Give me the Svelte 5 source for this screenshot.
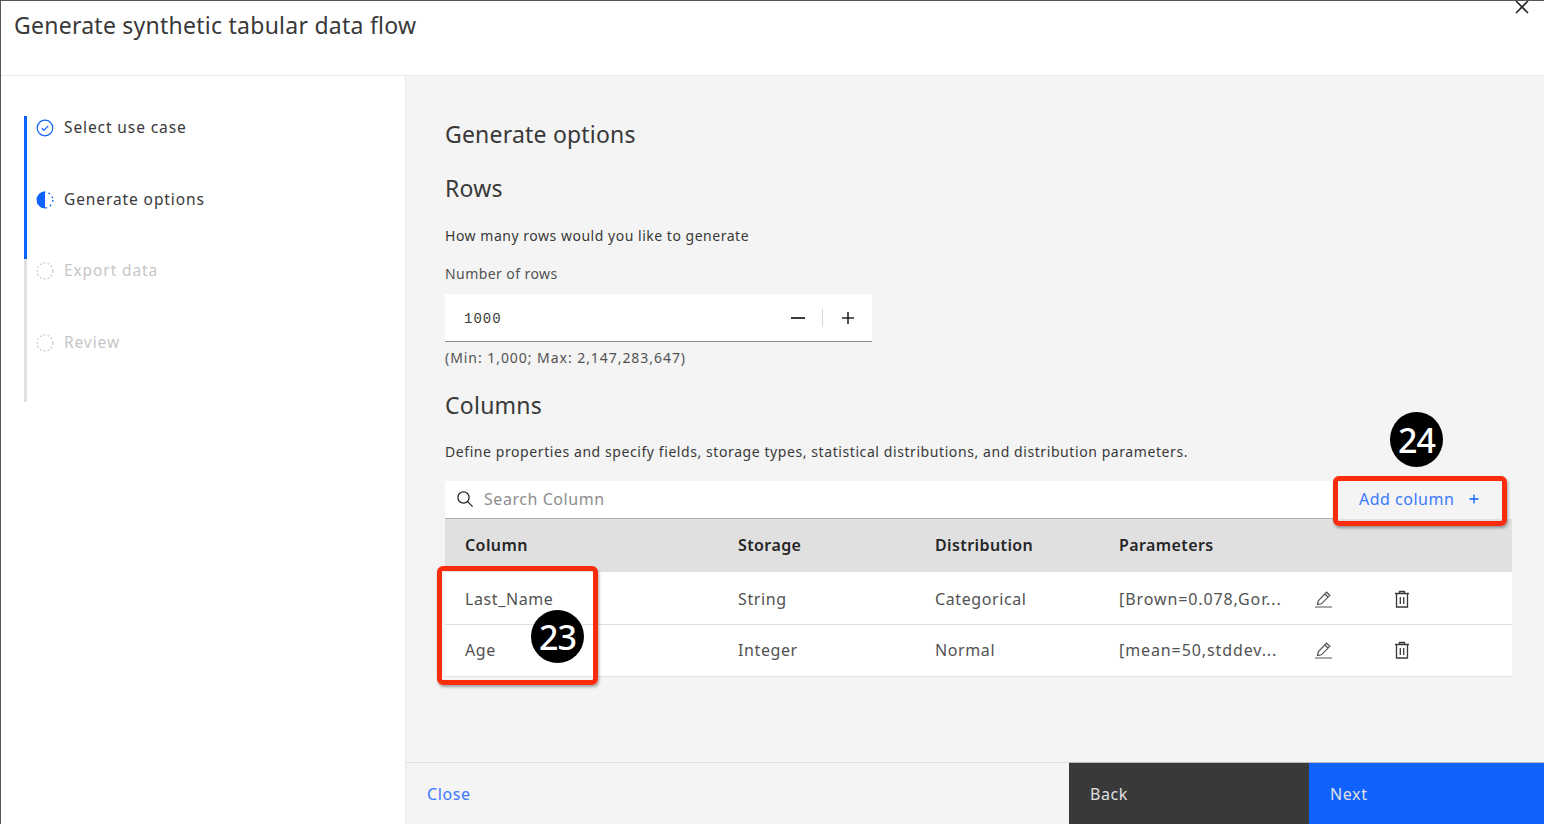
<script>
  const steps = [
    { label: 'Select use case', state: 'done' },
    { label: 'Generate options', state: 'current' },
    { label: 'Export data', state: 'todo' },
    { label: 'Review', state: 'todo' },
  ]

  const rows = [
    { column: 'Last_Name', storage: 'String', distribution: 'Categorical', parameters: '[Brown=0.078,Gor...' },
    { column: 'Age', storage: 'Integer', distribution: 'Normal', parameters: '[mean=50,stddev...' },
  ]
</script>

<div class="modal">
  <header class="head">
    <h1>Generate synthetic tabular data flow</h1>
    <svg class="close" width="18" height="18" viewBox="0 0 18 18" aria-hidden="true">
      <path d="M3 0 L15 12 M15 0 L3 12" stroke="#262626" stroke-width="1.6" fill="none" />
    </svg>
  </header>

  <div class="body">
    <nav class="side">
      <ul class="steps">
        {#each steps as step}
          <li class="step {step.state}">
            <svg width="18" height="18" viewBox="0 0 18 18" aria-hidden="true">
              {#if step.state === 'done'}
                <circle cx="9" cy="9" r="7.8" fill="none" stroke="#0f62fe" stroke-width="1.2" />
                <path d="M5.8 9.2 L8 11.3 L12.2 6.8" fill="none" stroke="#0f62fe" stroke-width="1.2" />
              {:else if step.state === 'current'}
                <path d="M9 0.6 A8.4 8.4 0 0 0 9 17.4 Z" fill="#0f62fe" />
                <circle cx="9" cy="9" r="7.8" fill="none" stroke="#0f62fe" stroke-width="1.3" stroke-dasharray="2 3" />
              {:else}
                <circle cx="9" cy="9" r="8" fill="none" stroke="#c6c6c6" stroke-width="1.1" stroke-dasharray="2 2" />
              {/if}
            </svg>
            <span>{step.label}</span>
          </li>
        {/each}
      </ul>
    </nav>

    <main class="main">
      <div class="content">
        <h2 class="title">Generate options</h2>
        <h2 class="rows-title">Rows</h2>
        <p class="lead">How many rows would you like to generate</p>
        <div class="label">Number of rows</div>
        <div class="number">
          <span class="value">1000</span>
          <svg class="minus" width="16" height="16" viewBox="0 0 16 16" aria-hidden="true">
            <path d="M1 8 H15" stroke="#262626" stroke-width="1.8" />
          </svg>
          <span class="sep"></span>
          <svg class="plus" width="16" height="16" viewBox="0 0 16 16" aria-hidden="true">
            <path d="M2 8 H14 M8 2 V14" stroke="#262626" stroke-width="1.6" />
          </svg>
        </div>
        <div class="helper">(Min: 1,000; Max: 2,147,283,647)</div>

        <h2 class="cols-title">Columns</h2>
        <p class="desc">Define properties and specify fields, storage types, statistical distributions, and distribution parameters.</p>

        <div class="toolbar">
          <div class="search">
            <svg width="18" height="18" viewBox="0 0 18 18" aria-hidden="true">
              <circle cx="7.5" cy="7.5" r="5.6" fill="none" stroke="#262626" stroke-width="1.3" />
              <path d="M11.6 11.6 L16.6 16.6" stroke="#262626" stroke-width="1.3" />
            </svg>
            <span>Search Column</span>
          </div>
          <div class="add">
            <span>Add column</span>
            <svg width="12" height="12" viewBox="0 0 12 12" aria-hidden="true">
              <path d="M1.5 6 H10.5 M6 1.5 V10.5" stroke="#0f62fe" stroke-width="1.3" />
            </svg>
          </div>
        </div>

        <div class="table">
          <div class="row th">
            <span>Column</span><span>Storage</span><span>Distribution</span><span>Parameters</span><span></span><span></span>
          </div>
          {#each rows as row}
            <div class="row td">
              <span>{row.column}</span>
              <span>{row.storage}</span>
              <span>{row.distribution}</span>
              <span>{row.parameters}</span>
              <span class="icon">
                <svg width="20" height="20" viewBox="0 0 20 20" aria-hidden="true">
                  <path d="M2 18 H19 M4.5 15.5 L5.3 11.8 L13.5 3.2 L16.8 6.3 L8.4 14.8 Z M11.8 5 L15 8" fill="none" stroke="#525252" stroke-width="1.2" />
                </svg>
              </span>
              <span class="icon">
                <svg width="18" height="20" viewBox="0 0 18 20" aria-hidden="true">
                  <path d="M2 4.5 H16 M6.5 4.5 V2.5 H11.5 V4.5 M3.5 4.5 V18 H14.5 V4.5 M7.3 8 V15 M10.7 8 V15" fill="none" stroke="#393939" stroke-width="1.3" />
                </svg>
              </span>
            </div>
          {/each}
        </div>
      </div>

      <footer class="foot">
        <span class="close-link">Close</span>
        <button class="btn back">Back</button>
        <button class="btn next">Next</button>
      </footer>
    </main>
  </div>

  <div class="mark mark-cells"></div>
  <div class="mark mark-add"></div>
  <div class="badge badge-23">23</div>
  <div class="badge badge-24">24</div>
</div>

<style>
  :global(body) {
    margin: 0;
    background: #fff;
  }

  .modal {
    position: relative;
    width: 1544px;
    height: 824px;
    box-sizing: border-box;
    overflow: hidden;
    display: flex;
    flex-direction: column;
    border-top: 1px solid #555;
    border-left: 1px solid #555;
    font-family: "Noto Sans", "Open Sans", sans-serif;
    color: #393939;
  }

  h1, h2, p { margin: 0; font-weight: 400; }

  .head {
    position: relative;
    height: 74px;
    flex-shrink: 0;
    background: #fff;
    border-bottom: 1px solid #ececec;
    box-sizing: content-box;
  }
  .head h1 {
    padding: 8px 0 0 13px;
    font-size: 23px;
    line-height: 32px;
    letter-spacing: 0.25px;
    color: #393939;
  }
  .close {
    position: absolute;
    top: 0;
    right: 13px;
  }

  .body {
    flex: 1;
    min-height: 0;
    display: flex;
  }

  .side {
    width: 404px;
    flex-shrink: 0;
    background: #fff;
    border-right: 1px solid #e8e8e8;
    box-sizing: content-box;
    padding-top: 40px;
  }

  .steps {
    list-style: none;
    margin: 0 0 0 23px;
    padding: 0;
  }

  .step {
    height: 71.5px;
    box-sizing: border-box;
    display: flex;
    align-items: flex-start;
    gap: 10px;
    padding-left: 9px;
    border-left: 3px solid #0f62fe;
    font-size: 15.5px;
    line-height: 22px;
    letter-spacing: 0.9px;
    color: #393939;
  }
  .step svg { margin-top: 3px; }
  .step.todo {
    border-left-color: #e0e0e0;
    color: #c6c6c6;
  }

  .main {
    flex: 1;
    min-width: 0;
    display: flex;
    flex-direction: column;
    background: #f4f4f4;
  }

  .content {
    flex: 1;
    min-height: 0;
    padding: 0 32px 0 39px;
  }

  .title {
    margin-top: 42px;
    font-size: 23px;
    line-height: 32px;
    letter-spacing: 0.2px;
    color: #393939;
  }
  .rows-title {
    margin-top: 22px;
    font-size: 23px;
    line-height: 32px;
    letter-spacing: 0.2px;
    color: #393939;
  }
  .lead {
    margin-top: 22px;
    font-size: 14px;
    line-height: 20px;
    letter-spacing: 0.52px;
  }
  .label {
    margin-top: 18px;
    font-size: 14px;
    line-height: 20px;
    letter-spacing: 0.43px;
    color: #525252;
  }
  .number {
    margin-top: 10px;
    width: 427px;
    height: 47px;
    display: flex;
    align-items: center;
    background: #fff;
    border-bottom: 1px solid #8d8d8d;
  }
  .value {
    flex: 1;
    padding: 2px 0 0 19px;
    font-family: "Liberation Mono", monospace;
    font-size: 14px;
    letter-spacing: 1px;
  }
  .minus { margin-right: 16px; }
  .sep {
    width: 1px;
    height: 18px;
    background: #d8d8d8;
    margin-right: 17px;
  }
  .plus { margin-right: 16px; }

  .helper {
    margin-top: 6px;
    font-size: 14px;
    line-height: 20px;
    letter-spacing: 0.95px;
    color: #525252;
  }

  .cols-title {
    margin-top: 21px;
    font-size: 23px;
    line-height: 32px;
    letter-spacing: 0.25px;
  }
  .desc {
    margin-top: 21px;
    font-size: 14px;
    line-height: 20px;
    letter-spacing: 0.58px;
  }

  .toolbar {
    margin-top: 19px;
    height: 38px;
    display: flex;
  }
  .search {
    width: 888px;
    box-sizing: border-box;
    display: flex;
    align-items: center;
    gap: 10px;
    padding: 0 0 2px 11px;
    background: #fff;
    border-bottom: 1px solid #b0b0b0;
    font-size: 16px;
    letter-spacing: 0.55px;
    color: #8d8d8d;
  }
  .add {
    flex: 1;
    display: flex;
    align-items: center;
    gap: 14px;
    padding: 0 0 2px 26px;
    font-size: 16px;
    letter-spacing: 0.5px;
    color: #3b78fe;
  }

  .table { width: 1067px; }
  .row {
    display: grid;
    grid-template-columns: 273px 197px 184px 194px 80px 1fr;
    align-items: center;
    padding-left: 20px;
    font-size: 16px;
  }
  .th {
    height: 53px;
    padding-bottom: 2px;
    box-sizing: border-box;
    background: #e0e0e0;
    font-weight: 600;
    letter-spacing: 0.4px;
    color: #262626;
  }
  .td {
    height: 53px;
    padding-top: 2px;
    box-sizing: border-box;
    background: #fff;
    border-bottom: 1px solid #e0e0e0;
    letter-spacing: 0.6px;
    color: #525252;
  }
  .td:last-child {
    height: 52px;
    padding-top: 0;
    padding-bottom: 2px;
  }
  .td span:nth-child(4) { letter-spacing: 0.9px; }
  .icon {
    display: flex;
    height: 20px;
  }

  .foot {
    height: 62px;
    flex-shrink: 0;
    box-sizing: border-box;
    display: flex;
    align-items: stretch;
    border-top: 1px solid #e0e0e0;
  }
  .close-link {
    flex: 1;
    align-self: center;
    padding-left: 21px;
    font-size: 16px;
    letter-spacing: 0.6px;
    color: #3b78fe;
  }
  .btn {
    border: none;
    border-top: 1px solid #bbb;
    margin-top: -1px;
    text-align: left;
    padding: 0 0 0 21px;
    font: inherit;
    font-size: 16px;
    letter-spacing: 0.6px;
    color: #e0e0e0;
  }
  .back { width: 240px; background: #393939; }
  .next { width: 235px; background: #0f62fe; }

  .mark {
    position: absolute;
    box-sizing: border-box;
    border: 5px solid #fa2c0c;
    border-radius: 6px;
    box-shadow: 1px 2px 3px rgba(0, 0, 0, 0.35);
  }
  .mark-cells { left: 436px; top: 565px; width: 161px; height: 119px; }
  .mark-add { left: 1332px; top: 475px; width: 174px; height: 50px; }

  .badge {
    position: absolute;
    width: 53px;
    height: 53px;
    border-radius: 50%;
    background: #000;
    color: #fff;
    display: flex;
    align-items: center;
    justify-content: center;
    font-family: "Noto Sans", sans-serif;
    font-size: 34px;
    font-weight: 500;
    letter-spacing: -1px;
  }
  .badge-23 { left: 530px; top: 609px; }
  .badge-24 { left: 1389px; top: 411px; height: 55px; }
</style>
